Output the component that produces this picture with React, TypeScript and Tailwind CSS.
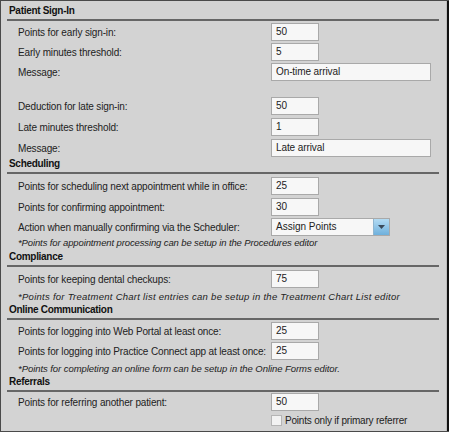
import React from "react";

const font = { fontFamily: '"Liberation Sans", Arial, sans-serif' };

function Header({ title, mt }: { title: string; mt: string }) {
  return (
    <div className={mt}>
      <div className="h-[12px] pl-[8px] text-[10px] leading-[12px] font-bold tracking-[-0.3px] text-[#111] whitespace-nowrap">{title}</div>
      <div className="mt-[2px] ml-[6px] mr-[7px] h-[2px] bg-[#666666]" />
    </div>
  );
}

function Row({ label, children, mt = "" }: { label: string; children?: React.ReactNode; mt?: string }) {
  return (
    <div className={`h-[20px] flex items-center pl-[17px] ${mt}`}>
      <div className="w-[253px] text-[10px] tracking-[-0.15px] text-[#222] whitespace-nowrap">{label}</div>
      {children}
    </div>
  );
}

function Input({ value, wide }: { value: string; wide?: boolean }) {
  return (
    <div
      className={`${wide ? "w-[160px]" : "w-[48px]"} h-[18px] border border-[#a9a9a9] bg-[#f7f7f7] pl-[4px] text-[10px] leading-[16px] tracking-[-0.1px] text-[#222]`}
    >
      {value}
    </div>
  );
}

function Note({ text, mt, track }: { text: string; mt: string; track: string }) {
  return (
    <div className={`h-[12px] leading-[12px] pl-[17px] text-[9.5px] italic text-[#222] whitespace-nowrap ${track} ${mt}`}>{text}</div>
  );
}

export default function App() {
  return (
    <div style={font} className="w-[449px] h-[432px] bg-[#d3d3d3] border-t border-l border-b border-[#4a4a4a] flex">
      <div className="flex-1 flex flex-col">
        <Header title="Patient Sign-In" mt="mt-[4px]" />
        <Row label="Points for early sign-in:" mt="mt-[1px]"><Input value="50" /></Row>
        <Row label="Early minutes threshold:"><Input value="5" /></Row>
        <Row label="Message:"><Input value="On-time arrival" wide /></Row>
        <Row label="Deduction for late sign-in:" mt="mt-[14px]"><Input value="50" /></Row>
        <Row label="Late minutes threshold:" mt="mt-[1px]"><Input value="1" /></Row>
        <Row label="Message:" mt="mt-[1px]"><Input value="Late arrival" wide /></Row>
        <Header title="Scheduling" mt="mt-0" />
        <Row label="Points for scheduling next appointment while in office:" mt="mt-[2px]"><Input value="25" /></Row>
        <Row label="Points for confirming appointment:" mt="mt-[1px]"><Input value="30" /></Row>
        <Row label="Action when manually confirming via the Scheduler:">
          <div className="w-[119px] h-[18px] flex border border-[#a9a9a9] bg-[#f7f7f7]">
            <div className="flex-1 pl-[4px] text-[10px] leading-[16px] text-[#222]">Assign Points</div>
            <div className="w-[16px] h-full border-l border-[#8fb5cf] bg-gradient-to-b from-[#b3dbf3] to-[#6eb0dc] flex items-center justify-center">
              <svg width="7" height="4" viewBox="0 0 7 4"><path d="M0 0h7L3.5 4z" fill="#3a4a5a" /></svg>
            </div>
          </div>
        </Row>
        <Note text="*Points for appointment processing can be setup in the Procedures editor" mt="mt-0" track="tracking-[-0.12px]" />
        <Header title="Compliance" mt="mt-[2px]" />
        <Row label="Points for keeping dental checkups:" mt="mt-[2px]"><Input value="75" /></Row>
        <Note text="*Points for Treatment Chart list entries can be setup in the Treatment Chart List editor" mt="mt-[2px]" track="tracking-[0.27px]" />
        <Header title="Online Communication" mt="mt-[1px]" />
        <Row label="Points for logging into Web Portal at least once:" mt="mt-[1px]"><Input value="25" /></Row>
        <Row label="Points for logging into Practice Connect app at least once:"><Input value="25" /></Row>
        <Note text="*Points for completing an online form can be setup in the Online Forms editor." mt="mt-[2px]" track="tracking-[-0.06px]" />
        <Header title="Referrals" mt="mt-[1px]" />
        <Row label="Points for referring another patient:"><Input value="50" /></Row>
        <div className="flex items-center pl-[270px] h-[12px] mt-[2px]">
          <div className="w-[11px] h-[11px] border border-[#b5b5b5] bg-[#f2f2f2]" />
          <div className="ml-[3px] text-[10px] tracking-[-0.2px] text-[#222] whitespace-nowrap">Points only if primary referrer</div>
        </div>
      </div>
      <div className="w-[1px] bg-[#bdbdbd]" />
      <div className="w-[2px] bg-[#111]" />
    </div>
  );
}
